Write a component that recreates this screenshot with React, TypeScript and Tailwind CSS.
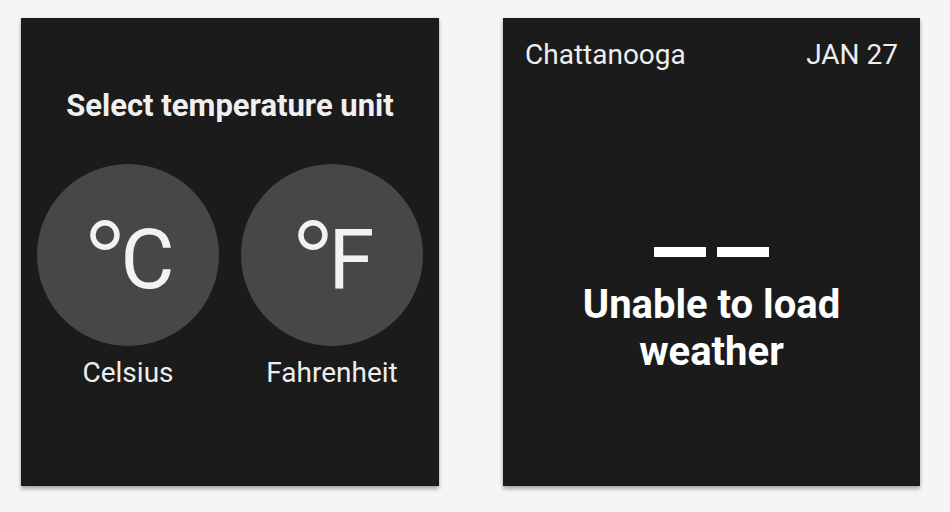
import React from "react";

function UnitButton({ unit, label }: { unit: string; label: string }) {
  return (
    <div className="flex flex-col items-center">
      <div className="w-[182px] h-[182px] rounded-full bg-[#474747] flex items-center justify-center">
        <div className="mt-[9px] flex items-start text-[83px] leading-[83px] text-[#f2f2f2]">
          <span className="text-[124px] leading-[83px] font-light tracking-[-8px] translate-y-[8px]">°</span>
          <span>{unit}</span>
        </div>
      </div>
      <div className="mt-[11px] text-[28px] leading-[32px] text-[#eeeeee]">{label}</div>
    </div>
  );
}

export default function App() {
  return (
    <div
      className="w-[950px] h-[512px] bg-[#f5f5f5] flex items-start pt-[18px] pl-[21px] gap-[64px]"
      style={{ fontFamily: "Roboto, 'Noto Sans', sans-serif" }}
    >
      <div className="w-[418px] h-[468px] bg-[#1b1b1b] shadow-[0_3px_4px_rgba(0,0,0,0.3),0_0_2px_rgba(0,0,0,0.12)] flex flex-col items-center pt-[69px]">
        <div className="text-[31px] leading-[37px] font-bold text-[#f0f0f0]">Select temperature unit</div>
        <div className="mt-[40px] flex gap-[22px]">
          <UnitButton unit="C" label="Celsius" />
          <UnitButton unit="F" label="Fahrenheit" />
        </div>
      </div>
      <div className="w-[417px] h-[468px] bg-[#1b1b1b] shadow-[0_3px_4px_rgba(0,0,0,0.3),0_0_2px_rgba(0,0,0,0.12)] flex flex-col">
        <div className="flex justify-between px-[22px] pt-[21px] text-[28px] leading-[32px] text-[#eeeeee]">
          <span>Chattanooga</span>
          <span>JAN 27</span>
        </div>
        <div className="mt-[176px] flex flex-col items-center">
          <div className="flex gap-[11px]">
            <div className="w-[52px] h-[10px] bg-white" />
            <div className="w-[52px] h-[10px] bg-white" />
          </div>
          <div className="mt-[24px] text-[40px] leading-[47px] font-bold text-white text-center">
            Unable to load
            <br />
            weather
          </div>
        </div>
      </div>
    </div>
  );
}
